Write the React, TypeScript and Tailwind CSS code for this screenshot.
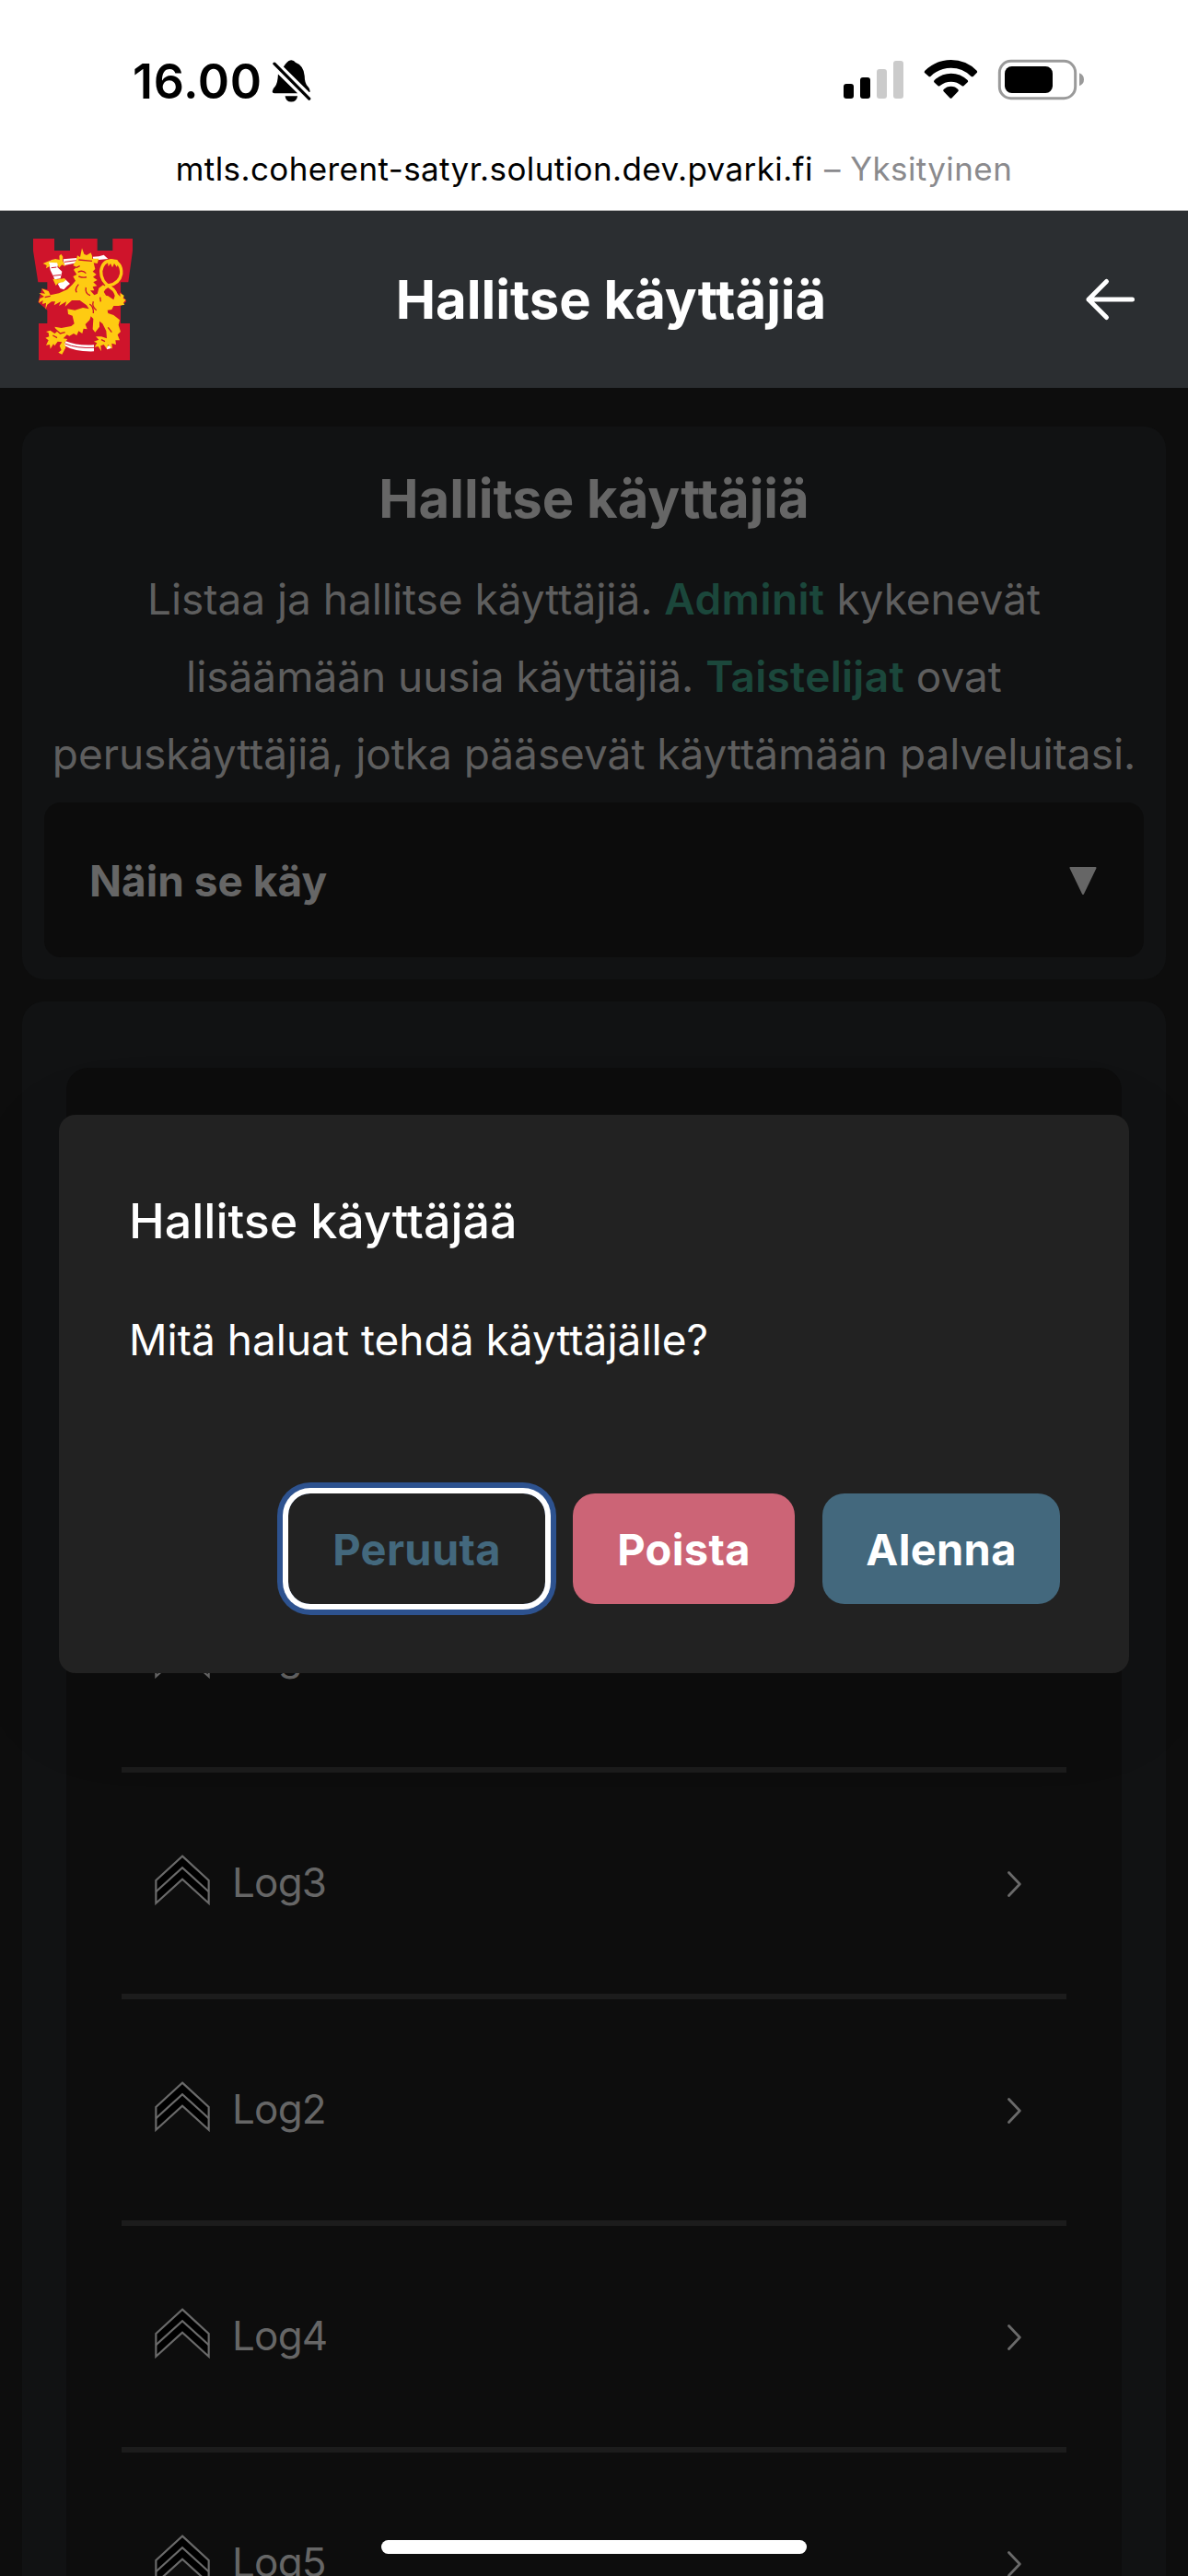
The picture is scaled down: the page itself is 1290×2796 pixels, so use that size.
import React from "react";

const users = ["Log1", "Log3", "Log2", "Log4", "Log5"];

function BellOff() {
  return (
    <svg viewBox="495 30 130 168" className="h-14 w-[43px]" fill="#000">
      <path d="M534 67Q541 56 545 53Q550 45 559 45Q569 45 573 53Q600 63 603 97Q603 121 614 132Q621 139 621 147Q621 151 618 150Z" />
      <path d="M516 91L580 154H504Q497 154 497 148Q498 139 506 132Q515 120 516 91Z" />
      <path d="M539 163H580Q577 182 559 182Q542 182 539 163Z" />
      <path d="M504 57L618 172" stroke="#000" strokeWidth="10" strokeLinecap="round" />
    </svg>
  );
}

function StatusIcons() {
  return (
    <svg viewBox="48 30 789 168" className="h-14 w-[263px]">
      <rect x="48" y="123" width="33" height="48" rx="9" />
      <rect x="102" y="102" width="33" height="69" rx="9" />
      <rect x="156" y="75" width="33" height="96" rx="9" fill="#cbcbcb" />
      <rect x="210" y="48" width="33" height="123" rx="9" fill="#cbcbcb" />
      <path d="M313 80Q349 45 398 45Q447 45 482 80Q485 84 482 87L471 98Q467 101 463 98Q436 71 398 71Q360 71 332 98Q328 101 325 98L312 87Q310 84 313 80Z" />
      <path d="M344 111Q367 89 398 89Q429 89 452 111Q455 115 452 118L440 129Q437 132 433 129Q418 116 398 116Q378 116 362 129Q359 132 355 129L343 118Q341 115 344 111Z" />
      <path d="M374 141Q384 131 398 131Q412 131 421 141Q424 145 421 148L401 169Q398 172 394 169L374 148Q371 145 374 141Z" />
      <rect x="556" y="49" width="247" height="121" rx="37" fill="none" stroke="#9a9a9a" strokeWidth="9" />
      <rect x="573" y="66" width="156" height="87" rx="23" />
      <path d="M816 88Q831 94 831 109Q831 124 816 130Z" fill="#9a9a9a" />
    </svg>
  );
}

/* Red castle shield with the crowned lion of Finland. */
function Crest() {
  return (
    <svg viewBox="48 57 324 396" className="h-[132px] w-[108px]">
      <path fill="#cf142b" d="M48 57H117V96H168V57H257V96H307V57H372V97L358 199H333V230L352 262L333 276V333H363V453H66V333H94V290L64 264L76 220L94 222V199H64L48 97Z" />
      <g fill="#fff">
        <path d="M146 124L190 120V136L150 144Z" />
        <path d="M242 116L262 115L278 110L292 123L262 126L244 124Z" />
        <path d="M98 133L112 125L131 132L127 150L142 164L137 187L118 190L112 176L104 160Z" />
        <path d="M128 204L152 189L168 204L158 212L148 223L136 219Z" />
        <path d="M154 391Q190 406 246 403V424Q184 426 148 404Z" />
        <path d="M288 408L300 404L302 414L288 418Z" />
      </g>
      <path d="M150 133L190 128M152 399Q190 415 246 412M112 178L138 175M107 152L124 150" stroke="#cf142b" strokeWidth="3" fill="none" />
      <g fill="#fecb12">
        <path d="M133 113L139 107L145 116L144 128L153 148L142 142L132 152L126 136L99 134L103 146L90 154L92 144L80 138L96 131L120 123L134 126Z" />
        <path d="M112 188L128 190L150 186L154 192L146 199L130 201L122 210Z" />
        <path d="M188 128L192 112L201 117L207 88L214 107L222 111L236 103L240 113L240 122L262 122L257 138L245 136L250 156L242 164L254 174L243 182L257 192L244 199L256 211L242 214L247 226L234 226L247 241L258 236L272 240L292 244L310 256L314 244L318 232L332 246L331 234L344 242L341 252L350 256L342 266L346 272L326 276L310 276L304 288L290 290L292 300L310 306L330 322L326 338L333 360L323 370L330 388L316 388L318 402L304 398L306 416L292 402L288 416L278 402L268 406L270 424L260 408L248 410L256 397L246 392L262 386L252 376L270 376L288 382L286 358L274 334L264 326L264 344L250 362L242 352L244 318L236 310L232 322L218 336L224 352L212 350L208 366L196 358L190 372L180 366L166 374L158 370L146 382L160 384L150 396L154 412L142 434L130 428L140 420L134 406L142 394L128 392L118 406L114 400L104 416L102 402L90 404L98 388L88 380L100 376L98 364L90 360L104 356L118 366L126 360L118 344L140 348L172 342L182 334L176 308L162 303L160 286L184 290L210 282L230 286L222 274L200 258L174 258L152 278L156 262L132 276L138 262L116 274L120 262L108 262L94 272L88 288L90 266L78 270L80 258L66 266L70 252L84 246L67 234L87 236L76 220L98 228L104 241L132 235L160 222L176 206L186 194L178 180L190 174L180 158L190 150L178 144Z" />
        <path d="M262 218L276 208L286 215L278 230L286 244L276 242L278 258L266 244L264 252L257 238Z" />
        <path d="M280 136L291 134L293 148L300 138L306 151L312 138L321 150L323 140L333 144L322 126L300 123Z" />
      </g>
      <path d="M322 256Q320 228 300 216Q268 196 269 163Q274 129 302 129Q338 134 335 172Q329 202 296 209Q278 216 270 232" fill="none" stroke="#fecb12" strokeWidth="10" />
      <path d="M196 126L240 130M188 152L200 146M194 166Q210 158 220 170M196 180Q214 186 222 182M220 216Q216 236 234 242M232 270Q246 280 244 300M244 262Q238 278 254 290M196 206Q182 222 190 232M86 248L104 244M120 352L136 366L152 362M112 372L126 380M292 346L304 362M270 386L282 392M266 248L268 262" fill="none" stroke="#cf142b" strokeWidth="4" />
    </svg>
  );
}

function RankIcon() {
  return (
    <svg viewBox="144 161 180 167" className="-mt-[5px] h-[55px] w-[60px] shrink-0" stroke="#6a6a6a" strokeWidth="6.6">
      <path d="M234 166L321 246V321L234 242L147 321V246Z" fill="#000" />
      <path d="M147 283L234 204L321 283" fill="none" />
    </svg>
  );
}

function UserRow({ name }: { name: string }) {
  return (
    <li className="flex h-[246px] items-center border-t-[6px] border-[#1c1c1c] pr-[49px] pb-0.5 pl-9">
      <RankIcon />
      <span className="ml-6 flex-1 text-[44px] leading-[66px] tracking-[-0.8px] text-[#666]">{name}</span>
      <svg viewBox="0 0 15 28" className="mt-[3px] h-7 w-[15px]" fill="none" stroke="#6a6a6a" strokeWidth="2.8" strokeLinecap="round" strokeLinejoin="round">
        <path d="M1.5 1.5L13.3 14L1.5 26.5" />
      </svg>
    </li>
  );
}

export default function App() {
  return (
    <div className="relative flex h-[2796px] w-[1290px] flex-col overflow-hidden bg-[#0d0d0d] font-['Inter',sans-serif]">
      <div className="h-[229px] shrink-0 border-b border-[#aaa] bg-white pt-[60px] text-black">
        <div className="flex h-14 items-center pr-[111px] pl-36">
          <span className="mt-0.5 w-[151px] text-[52px] font-semibold tracking-[0.7px]">16.00</span>
          <BellOff />
          <span className="flex-1" />
          <StatusIcons />
        </div>
        <p className="mt-[39px] text-center text-[35px] leading-[56px] tracking-[0.4px] whitespace-nowrap">
          mtls.coherent-satyr.solution.dev.pvarki.fi <span className="ml-0.5 text-[#8a8a8d]">– Yksityinen</span>
        </p>
      </div>

      <header className="flex h-48 shrink-0 items-center bg-[#2b2e31] pr-[54px] pl-9">
        <Crest />
        <h1 className="ml-[7px] flex-1 text-center text-[58px] font-bold text-white">Hallitse käyttäjiä</h1>
        <svg viewBox="0 0 60 50" className="h-[50px] w-[60px]" fill="none" stroke="#fff" strokeWidth="5" strokeLinecap="round" strokeLinejoin="round">
          <path d="M53.5 25H6M25.5 5.5L6 25L25.5 44.5" />
        </svg>
      </header>

      <main className="mt-[42px] flex flex-col gap-6 px-6">
        <section className="rounded-[24px] bg-[#111213] px-6 pt-9 pb-6">
          <h2 className="text-center text-[58px] leading-[84px] font-bold text-[#666]">Hallitse käyttäjiä</h2>
          <p className="mt-[25px] text-center text-[46px] leading-[84px] tracking-[-0.04px] whitespace-nowrap text-[#5e5e5e]">
            Listaa ja hallitse käyttäjiä. <b className="font-semibold tracking-[0.4px] text-[#1b473b]">Adminit</b> kykenevät
            <br />
            lisäämään uusia käyttäjiä. <b className="font-semibold tracking-[0.3px] text-[#1b473b]">Taistelijat</b> ovat
            <br />
            peruskäyttäjiä, jotka pääsevät käyttämään palveluitasi.
          </p>
          <div className="mt-[11px] flex h-[168px] items-center justify-between rounded-[18px] bg-[#0c0c0c] pr-[51px] pl-[49px]">
            <span className="mt-0.5 text-[46px] font-bold text-[#666]">Näin se käy</span>
            <svg viewBox="0 0 30 30" className="mt-0.5 h-[30px] w-[30px]">
              <path d="M1.5 1H28.5L15 29Z" fill="#666" stroke="#666" strokeWidth="2" strokeLinejoin="round" />
            </svg>
          </div>
        </section>

        <section className="h-[1900px] rounded-[24px] bg-[#111213] px-12 pt-[72px]">
          <ul className="h-[1828px] rounded-[24px] bg-[#0d0d0d] px-[60px] pt-[513px]">
            {users.map((name) => (
              <UserRow key={name} name={name} />
            ))}
          </ul>
        </section>
      </main>

      <div role="dialog" className="absolute top-[1210px] left-16 h-[606px] w-[1162px] rounded-[18px] bg-[#222] px-[75px] pt-[76px] text-white shadow-[0_30px_110px_rgba(0,0,0,0.1)]">
        <h3 className="pl-px text-[52px] leading-[80px] font-medium">Hallitse käyttäjää</h3>
        <p className="mt-12 pl-px text-[46px] leading-[80px]">Mitä haluat tehdä käyttäjälle?</p>
        <div className="mt-[127px] flex justify-end gap-[30px] text-[47px] leading-[60px] font-bold tracking-[0.3px]">
          <button className="h-[120px] w-[279px] rounded-[24px] pt-0.5 text-[#43687d] shadow-[0_0_0_6px_#fff,0_0_0_12px_#2d528f]">Peruuta</button>
          <button className="h-[120px] w-[241px] rounded-[24px] bg-[#cc6476] pt-0.5">Poista</button>
          <button className="h-[120px] w-[258px] rounded-[24px] bg-[#43687d] pt-0.5">Alenna</button>
        </div>
      </div>

      <div className="absolute top-[2757px] left-[414px] h-[15px] w-[462px] rounded-full bg-white" />
    </div>
  );
}
